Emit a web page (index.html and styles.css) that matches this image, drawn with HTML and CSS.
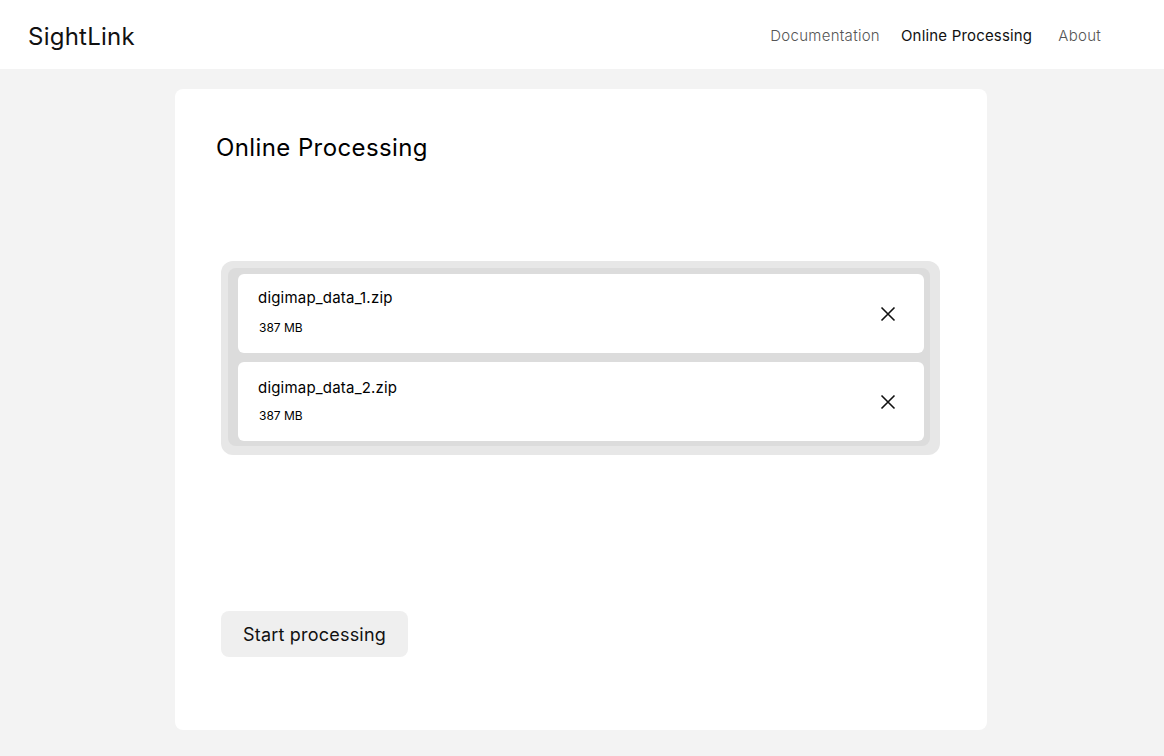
FILE: index.html
```html
<!DOCTYPE html>
<html>
<head>
<meta charset="utf-8">
<link rel="stylesheet" href="styles.css">
</head>
<body>
<header class="topbar">
  <div class="brand">SightLink</div>
  <nav class="nav">
    <a class="nav-link muted">Documentation</a>
    <a class="nav-link active">Online Processing</a>
    <a class="nav-link muted about">About</a>
  </nav>
</header>
<main class="card">
  <h1 class="title">Online Processing</h1>
  <div class="filebox">
    <div class="filelist">
      <div class="file">
        <div class="file-info">
          <div class="file-name">digimap_data_1.zip</div>
          <div class="file-size">387 MB</div>
        </div>
        <svg class="close" width="16" height="16" viewBox="0 0 16 16"><path d="M1.5 1.5 L14.5 14.5 M14.5 1.5 L1.5 14.5" stroke="#111" stroke-width="1.6" fill="none"/></svg>
      </div>
      <div class="file">
        <div class="file-info">
          <div class="file-name">digimap_data_2.zip</div>
          <div class="file-size">387 MB</div>
        </div>
        <svg class="close" width="16" height="16" viewBox="0 0 16 16"><path d="M1.5 1.5 L14.5 14.5 M14.5 1.5 L1.5 14.5" stroke="#111" stroke-width="1.6" fill="none"/></svg>
      </div>
    </div>
  </div>
  <button class="start">Start processing</button>
</main>
</body>
</html>
```

FILE: styles.css
```css
* { box-sizing: border-box; }
html, body { margin: 0; padding: 0; }
body {
  background: #f3f3f3;
  font-family: Inter, "Noto Sans", sans-serif;
  color: #111;
  height: 756px;
  overflow: hidden;
}
.topbar {
  height: 69px;
  background: #fff;
  display: flex;
  align-items: center;
  justify-content: space-between;
  padding: 3px 63px 0 28px;
}
.brand {
  font-size: 24px;
  font-weight: 400;
  color: #111;
  letter-spacing: 0.25px;
}
.nav { display: flex; align-items: center; }
.nav-link {
  font-size: 15px;
  line-height: 20px;
  color: #111;
  letter-spacing: 0.18px;
}
.nav-link.muted { color: #555; font-weight: 300; letter-spacing: 0.28px; }
.nav-link.active { margin-left: 21px; }
.nav-link.about { margin-left: 26px; }
.card {
  width: 812px;
  height: 641px;
  margin: 20px 0 0 175px;
  background: #fff;
  border-radius: 8px;
  padding: 0 47px 0 46px;
  display: flex;
  flex-direction: column;
}
.title {
  margin: 44px 0 0 -5px;
  font-size: 24px;
  font-weight: 400;
  line-height: 30px;
  letter-spacing: 0.4px;
  color: #000;
}
.filebox {
  margin-top: 98px;
  background: #e7e7e7;
  border-radius: 12px;
  padding: 7px 10px 9px 7px;
}
.filelist {
  background: #dcdcdc;
  border-radius: 8px;
  padding: 6px 6px 5px 10px;
  display: flex;
  flex-direction: column;
  gap: 9px;
}
.file {
  background: #fff;
  border-radius: 6px;
  height: 79px;
  display: flex;
  align-items: flex-start;
  justify-content: space-between;
  padding: 14px 28px 0 20px;
  color: #000;
}
.file + .file { padding-top: 16px; }
.file-info { display: flex; flex-direction: column; }
.file-name {
  font-size: 15px;
  line-height: 20px;
  letter-spacing: 0.2px;
}
.file-size {
  font-size: 12px;
  line-height: 16px;
  margin-top: 12px;
  margin-left: 1px;
}
.file + .file .file-size { margin-top: 10px; }
.close { display: block; margin-top: 18px; }
.file + .file .close { margin-top: 16px; }
.start {
  margin-top: auto;
  margin-bottom: 73px;
  align-self: flex-start;
  width: 187px;
  height: 46px;
  border: none;
  border-radius: 8px;
  background: #efefef;
  font-family: Inter, "Noto Sans", sans-serif;
  font-size: 18px;
  letter-spacing: 0.2px;
  color: #111;
  padding: 0;
}
```
